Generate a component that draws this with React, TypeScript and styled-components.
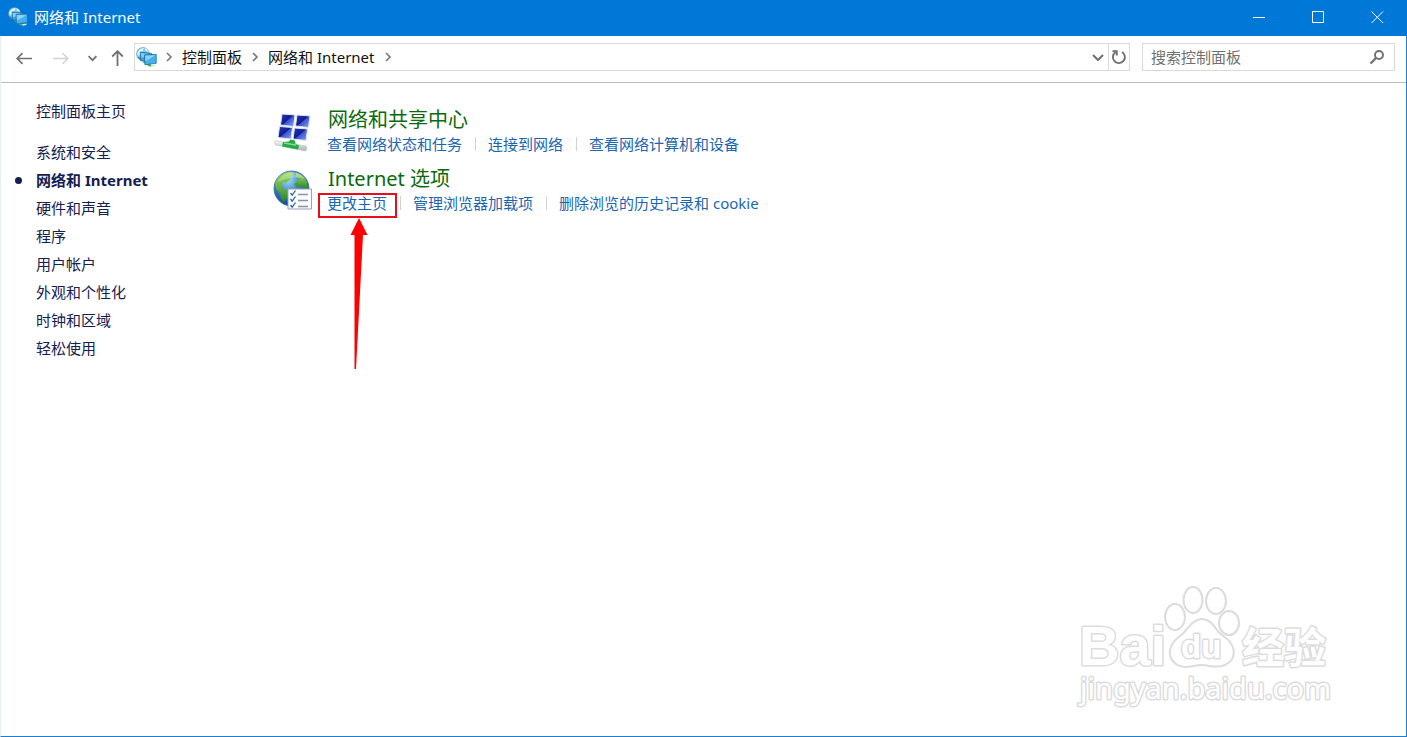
import React from 'react';
import styled, { createGlobalStyle, css } from 'styled-components';

const GlobalStyle = createGlobalStyle`
  *, *::before, *::after { box-sizing: border-box; }
  body {
    margin: 0;
    background: #fff;
    font-family: "Noto Sans", "Noto Sans CJK SC", sans-serif;
    font-size: 15px;
    line-height: 20px;
  }
  button, input { font: inherit; }
  svg { display: block; flex: none; }
`;

const Window = styled.div`
  position: relative;
  display: flex;
  flex-direction: column;
  min-height: 100vh;
  background: #fff;
  border: 1px solid #1a7fd0;
  border-top: 0;
  border-left-color: #e4f0f9;
`;

const TitleBar = styled.header`
  display: flex;
  align-items: center;
  height: 36px;
  margin: 0 -1px;
  padding: 0 0 2px 8px;
  gap: 6px;
  background: #0078d7;
  color: #fff;
`;

const Title = styled.h1`
  flex: 1;
  margin: 0;
  font-size: 15px;
  font-weight: 400;
`;

const WindowButtons = styled.div`
  display: flex;
`;

const WindowButton = styled.button`
  display: flex;
  align-items: center;
  justify-content: center;
  width: 59px;
  height: 34px;
  padding: 0;
  border: 0;
  background: transparent;
  color: #fff;
`;

const Toolbar = styled.div`
  display: flex;
  align-items: center;
  height: 47px;
  padding: 7px 11px 11px 13px;
  border-bottom: 1px solid #bdbdbd;
`;

const NavGroup = styled.nav`
  display: flex;
  align-items: center;
  width: 120px;
  padding-top: 2px;
  flex: none;
`;

const NavButton = styled.button<{ $width: number; $faded?: boolean }>`
  display: flex;
  align-items: center;
  justify-content: center;
  flex: none;
  width: ${(p) => p.$width}px;
  height: 26px;
  padding: 0;
  border: 0;
  background: transparent;
  color: ${(p) => (p.$faded ? '#d2d2d2' : '#707070')};
`;

const AddressBar = styled.div`
  display: flex;
  align-items: center;
  flex: 1;
  height: 28px;
  padding-left: 1px;
  border: 1px solid #d9d9d9;
`;

const Crumbs = styled.ol`
  display: flex;
  align-items: center;
  flex: 1;
  gap: 9px;
  margin: 0 0 0 8px;
  padding: 0 0 1px;
  list-style: none;
  color: #777;
`;

const Crumb = styled.li`
  display: flex;
  align-items: center;
  gap: 9px;
`;

const CrumbLink = styled.a`
  color: #111;
  text-decoration: none;
`;

const RefreshBox = styled.div`
  display: flex;
  align-items: center;
  height: 26px;
  border-left: 1px solid #d9d9d9;
`;

const SearchBox = styled.label`
  display: flex;
  align-items: center;
  flex: 0 1 253px;
  min-width: 0;
  height: 28px;
  margin-left: 12px;
  padding: 0 9px 0 8px;
  border: 1px solid #d9d9d9;
  color: #707070;
`;

const SearchInput = styled.input`
  flex: 1;
  min-width: 0;
  padding: 0;
  border: 0;
  outline: 0;
  background: transparent;
  color: #666;
  &::placeholder { color: #707070; opacity: 1; }
`;

const Body = styled.div`
  display: flex;
  flex: 1;
`;

const Sidebar = styled.nav`
  flex: none;
  width: 272px;
  padding: 18px 0 0 14px;
`;

const SideList = styled.ul`
  margin: 17px 0 0;
  padding: 0;
  list-style: none;
`;

const sideText = css`
  color: #14204f;
  text-decoration: none;
`;

const HomeLink = styled.a`
  ${sideText}
  display: block;
  padding-left: 21px;
`;

const SideItem = styled.li`
  display: flex;
  align-items: center;
  height: 28px;
`;

const Bullet = styled.span<{ $on?: boolean }>`
  width: 7px;
  height: 7px;
  margin-right: 14px;
  border-radius: 50%;
  background: ${(p) => (p.$on ? '#14204f' : 'transparent')};
`;

const SideLink = styled.a<{ $current?: boolean }>`
  ${sideText}
  font-weight: ${(p) => (p.$current ? 700 : 400)};
`;

const Main = styled.main`
  flex: 1;
  padding-top: 24px;
`;

const Category = styled.section`
  display: flex;
  gap: 14px;
  height: 59px;
`;

const IconSlot = styled.div`
  flex: none;
  width: 40px;
  padding-top: 4px;
`;

const CategoryTitle = styled.h2`
  margin: 0 0 1px 1px;
  font-size: 20px;
  line-height: 26px;
  font-weight: 400;
`;

const TitleLink = styled.a`
  color: #0b6a0b;
  text-decoration: none;
`;

const Tasks = styled.ul`
  display: flex;
  margin: 0;
  padding: 0;
  list-style: none;
`;

const Task = styled.li`
  position: relative;
  display: flex;
  align-items: center;
  & + &::before {
    content: "";
    width: 1px;
    height: 14px;
    margin: 0 12px 0 13px;
    background: #ccd3da;
  }
`;

const TaskLink = styled.a`
  color: #1a66b0;
  text-decoration: none;
`;

const Highlight = styled.span`
  position: absolute;
  left: -9px;
  top: 0;
  width: 79px;
  height: 25px;
  border: 2px solid #e6101c;
`;

const Arrow = styled.svg`
  position: absolute;
  left: 22px;
  top: 25px;
`;

const Watermark = styled.svg`
  position: absolute;
  right: 70px;
  bottom: 24px;
  fill: #fff;
  stroke: #dcdcdc;
  stroke-width: 2px;
  stroke-linejoin: round;

  text {
    paint-order: stroke;
    stroke-width: 3px;
  }
`;

function NetworkIcon({ size }: { size: number }) {
  return (
    <svg width={size} height={size} viewBox="0 0 20 20" aria-hidden="true">
      <circle cx="6.500" cy="6.500" r="6" fill="#8cc8e8" stroke="#4f9cc8" strokeWidth=".6" />
      <path d="M1.500 5Q4 1.200 7.500 1L6.500 3.500 4.500 5 3.500 8 1.500 7.500ZM8.500 1Q11 2 12 4.500L9 3.500Z" fill="#e3f6fd" />
      <path d="M1 9 4 10 6 13Q2.500 12.500 1 9" fill="#4389b9" />
      <path d="M6 14 13 18.800 16 18 9 13Z" fill="#45b84c" />
      <path d="M4 4.800 15 6.200V14.500L4.500 13Z" fill="#37a0e2" stroke="#1e6797" strokeWidth=".7" />
      <path d="M4.800 5.700 14 6.900 5.200 10.500Z" fill="#86cdf6" />
      <path d="M8 7.500 19.300 7V15.500L8.500 17Z" fill="#45aff0" stroke="#1e6797" strokeWidth=".7" />
      <path d="M8.800 8.300 18.500 7.900 9 13.500Z" fill="#8bd5fb" />
      <path d="M14 17.200 18.500 16.400V18L15 18.700Z" fill="#d8e4e8" />
    </svg>
  );
}

function SharingIcon() {
  const screens = [
    [7.5, 3],
    [22.5, 4],
    [5, 15.5],
    [20, 17],
  ];
  return (
    <svg width="40" height="42" viewBox="0 0 40 42" aria-hidden="true">
      <defs>
        <linearGradient id="screen" x1="0" y1="0" x2="1" y2="1">
          <stop offset="0" stopColor="#2a3bb5" />
          <stop offset=".48" stopColor="#101c93" />
          <stop offset=".52" stopColor="#3b55cf" />
          <stop offset="1" stopColor="#8ba7f2" />
        </linearGradient>
        <linearGradient id="pipe" x1="0" y1="0" x2="0" y2="1">
          <stop offset="0" stopColor="#f7f9f9" />
          <stop offset="1" stopColor="#a9b2b5" />
        </linearGradient>
      </defs>
      {screens.map(([x, y]) => (
        <path
          key={`${x}-${y}`}
          transform={`translate(${x} ${y})`}
          d="M1.500 0 14.500 1 13 12.500 0 11Z"
          fill="url(#screen)"
          stroke="#dfe3ee"
          strokeWidth="1"
        />
      ))}
      <path d="M2.500 29.500 33 35Q35 37.500 32.500 40L2.500 34Q.5 31.500 2.500 29.500Z" fill="url(#pipe)" stroke="#b3babd" strokeWidth=".5" />
      <path d="M10 31 16 30.500 17.500 28.500 22 29.500 22.500 33 26 34.500 25 38.500 9 35.500Z" fill="#27a844" />
      <path d="M11 32 23 34" stroke="#83dc8e" strokeWidth="1.300" />
    </svg>
  );
}

function InternetOptionsIcon() {
  return (
    <svg width="40" height="42" viewBox="0 0 40 42" aria-hidden="true">
      <defs>
        <radialGradient id="sea" cx=".4" cy=".25" r=".8">
          <stop offset="0" stopColor="#a5dcf8" />
          <stop offset=".45" stopColor="#3a86d0" />
          <stop offset="1" stopColor="#12377e" />
        </radialGradient>
        <linearGradient id="land" x1="0" y1="0" x2="0" y2="1">
          <stop offset="0" stopColor="#a2dc60" />
          <stop offset="1" stopColor="#27852c" />
        </linearGradient>
      </defs>
      <circle cx="18.500" cy="18.500" r="17.500" fill="url(#sea)" stroke="#3c6fa5" strokeWidth=".8" />
      <path d="M5 8Q11 1 19 2L21 5 16 7 18 9 13 13 10 12 8 16 11 18 15 22 14 28 11 32 8 29 7 23 3 19 2 13Z" fill="url(#land)" />
      <path d="M23 3Q31 5 34 12L35 19 31 19 29 16 25 18 21 15 23 11 27 9 23 7Z" fill="url(#land)" />
      <path d="M4 12Q10 3 19 2Q28 2 32 9Q22 5 4 12" fill="#fff" opacity=".25" />
      <path d="M15 19H38.500V39H15Z" fill="#fdfdff" stroke="#9a9fb8" />
      <g fill="none" strokeWidth="1.300">
        <path d="M17.500 23 19.200 25.200 22.500 20.500M17.500 29 19.200 31.200 22.500 26.500M17.500 35 19.200 37.200 22.500 32.500" stroke="#2b66a8" />
        <path d="M25 24.500H35M25 30.500H35M25 36.500H35" stroke="#8a94a0" />
      </g>
    </svg>
  );
}

function Chevron() {
  return (
    <svg width="8" height="10" viewBox="0 0 8 10" fill="none" stroke="currentColor" strokeWidth="1.600" aria-hidden="true">
      <path d="M2 1 6 5 2 9" />
    </svg>
  );
}

const sections = ['系统和安全', '网络和 Internet', '硬件和声音', '程序', '用户帐户', '外观和个性化', '时钟和区域', '轻松使用'];

const categories = [
  { title: '网络和共享中心', icon: <SharingIcon />, tasks: ['查看网络状态和任务', '连接到网络', '查看网络计算机和设备'] },
  { title: 'Internet 选项', icon: <InternetOptionsIcon />, tasks: ['更改主页', '管理浏览器加载项', '删除浏览的历史记录和 cookie'] },
];

export default function App() {
  return (
    <Window>
      <GlobalStyle />
      <TitleBar>
        <NetworkIcon size={20} />
        <Title>网络和 Internet</Title>
        <WindowButtons>
          <WindowButton aria-label="最小化">
            <svg width="13" height="13" viewBox="0 0 13 13" stroke="currentColor"><path d="M0 6.500H12" /></svg>
          </WindowButton>
          <WindowButton aria-label="最大化">
            <svg width="13" height="13" viewBox="0 0 13 13" fill="none" stroke="currentColor"><path d="M.5 .5H11.500V11.500H.5Z" /></svg>
          </WindowButton>
          <WindowButton aria-label="关闭">
            <svg width="13" height="13" viewBox="0 0 13 13" stroke="currentColor"><path d="M.5 .5 12 12M12 .5 .5 12" /></svg>
          </WindowButton>
        </WindowButtons>
      </TitleBar>

      <Toolbar>
        <NavGroup>
          <NavButton $width={20} aria-label="后退">
            <svg width="16" height="13" viewBox="0 0 16 13" fill="none" stroke="currentColor" strokeWidth="1.700"><path d="M16 6.500H1.500M6.500 1.200 1.200 6.500 6.500 11.800" /></svg>
          </NavButton>
          <NavButton $width={54} $faded aria-label="前进">
            <svg width="16" height="13" viewBox="0 0 16 13" fill="none" stroke="currentColor" strokeWidth="1.400"><path d="M0 6.500H14.500M9.500 1.200 14.800 6.500 9.500 11.800" /></svg>
          </NavButton>
          <NavButton $width={9} aria-label="最近浏览的位置">
            <svg width="9" height="7" viewBox="0 0 9 7" fill="none" stroke="currentColor" strokeWidth="1.700"><path d="M.6 1.200 4.500 5.200 8.400 1.200" /></svg>
          </NavButton>
          <NavButton $width={41} aria-label="上移">
            <svg width="13" height="16" viewBox="0 0 13 16" fill="none" stroke="currentColor" strokeWidth="1.800"><path d="M6.500 16V1.500M1.200 6.500 6.500 1.200 11.800 6.500" /></svg>
          </NavButton>
        </NavGroup>
        <AddressBar>
          <NetworkIcon size={21} />
          <Crumbs>
            <Chevron />
            {['控制面板', '网络和 Internet'].map((name) => (
              <Crumb key={name}>
                <CrumbLink href="#">{name}</CrumbLink>
                <Chevron />
              </Crumb>
            ))}
          </Crumbs>
          <NavButton $width={20} aria-label="展开地址">
            <svg width="12" height="8" viewBox="0 0 12 8" fill="none" stroke="currentColor" strokeWidth="2"><path d="M1 2 6 7 11 2" /></svg>
          </NavButton>
          <RefreshBox>
            <NavButton $width={20} aria-label="刷新">
              <svg width="16" height="16" viewBox="0 0 16 16" fill="none" stroke="currentColor" strokeWidth="1.900">
                <path d="M11 3A6 6 0 1 1 4.500 3.200" />
                <path d="M1.500 2.200H5.800V6.500" />
              </svg>
            </NavButton>
          </RefreshBox>
        </AddressBar>
        <SearchBox>
          <SearchInput type="search" placeholder="搜索控制面板" aria-label="搜索控制面板" />
          <svg width="16" height="16" viewBox="0 0 16 16" fill="none" stroke="currentColor" strokeWidth="1.900" aria-hidden="true">
            <circle cx="10" cy="6" r="4" />
            <path d="M7.200 8.800 1.500 14.500" strokeWidth="2.300" />
          </svg>
        </SearchBox>
      </Toolbar>

      <Body>
        <Sidebar>
          <HomeLink href="#">控制面板主页</HomeLink>
          <SideList>
            {sections.map((name, i) => (
              <SideItem key={name}>
                <Bullet $on={i === 1} />
                <SideLink href="#" $current={i === 1}>{name}</SideLink>
              </SideItem>
            ))}
          </SideList>
        </Sidebar>
        <Main>
          {categories.map((category) => (
            <Category key={category.title}>
              <IconSlot>{category.icon}</IconSlot>
              <div>
                <CategoryTitle><TitleLink href="#">{category.title}</TitleLink></CategoryTitle>
                <Tasks>
                  {category.tasks.map((task) => (
                    <Task key={task}>
                      <TaskLink href="#">{task}</TaskLink>
                      {task === '更改主页' && (
                        <>
                          <Highlight />
                          <Arrow width="20" height="152" viewBox="0 0 20 152" aria-hidden="true">
                            <path d="M10 0 18.500 17H14L7 151H5.500L5.500 17H1.500Z" fill="#fe0000" />
                          </Arrow>
                        </>
                      )}
                    </Task>
                  ))}
                </Tasks>
              </div>
            </Category>
          ))}
        </Main>
      </Body>

      <Watermark width="260" height="130" viewBox="0 0 260 130" aria-hidden="true">
        <ellipse cx="99" cy="35" rx="10" ry="13" />
        <ellipse cx="117" cy="18" rx="9.500" ry="13" />
        <ellipse cx="140" cy="19" rx="10" ry="13" />
        <ellipse cx="153" cy="41" rx="10" ry="12" />
        <path d="M126 37C137 37 139 49 147 54C160 62 162 77 149 83C139 87 134 83 126 83C117 83 109 88 100 82C89 74 94 61 104 54C112 48 116 37 126 37Z" />
        <text x="3" y="83" fontSize="56" fontFamily="Liberation Sans, sans-serif" fontWeight="700">Bai</text>
        <text x="105" y="76" fontSize="33" fontFamily="Liberation Sans, sans-serif" fontWeight="700">du</text>
        <text x="166" y="81" fontSize="42" fontFamily="Noto Sans CJK SC, sans-serif" fontWeight="700">经验</text>
        <text x="4" y="117" fontSize="29" fontFamily="Noto Sans, sans-serif">jingyan.baidu.com</text>
      </Watermark>
    </Window>
  );
}
